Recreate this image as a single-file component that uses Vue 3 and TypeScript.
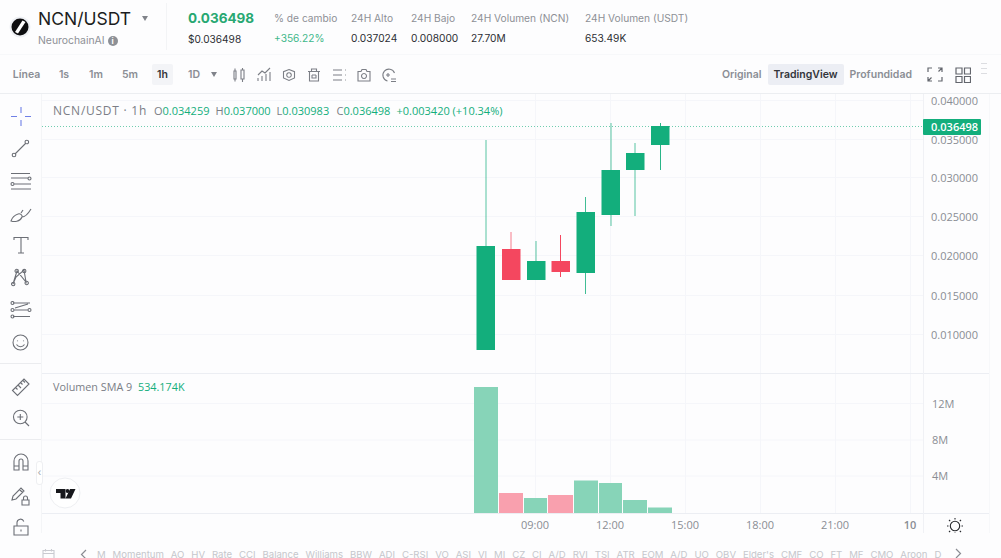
<script setup lang="ts">
interface Stat { label: string; value: string; up?: boolean }
const stats: Stat[] = [
  { label: '% de cambio', value: '+356.22%', up: true },
  { label: '24H Alto', value: '0.037024' },
  { label: '24H Bajo', value: '0.008000' },
  { label: '24H Volumen (NCN)', value: '27.70M' },
  { label: '24H Volumen (USDT)', value: '653.49K' },
]
const intervals = ['1s', '1m', '5m', '1h']
const tools: string[] = [
  'M3 4h2v8H3zM4 1.500V4M4 12v2.500M10 3h3v9h-3zM11.500 1v2M11.500 12v3',
  'M2 14v-3M6 14V9M10 14V7M14 14V5M2 8l4-4 3 2 5-5',
  'M8 2.500l5.500 2.200V11L8 13.500 2.500 11V4.700zM8 5.700a2.300 2.300 0 1 0 .01 0',
  'M2 4.500h12M5.500 4.500V2h5v2.500M3.500 4.500V14h9V4.500M6 8h4M6 8v3h4V8',
  'M2 3h9M2 8h9M2 13h9M14 3h.8M14 8h.8M14 13h.8',
  'M2 4.500h3l1-2h4l1 2h3V14H2zM8 6.500a2.500 2.500 0 1 0 .01 0',
  'M13.500 6A6 6 0 1 0 6.500 14M5 8h4M7 6v4M10 12h5M10 14.500h5',
]
const sideA: string[] = [
  'M11 0v6M11 13v6M1 9.500h6M15 9.500h6',
  'M5 15L16 4M2.200 16a1.800 1.800 0 1 0 3.600 0 1.800 1.800 0 1 0-3.600 0M15 3a1.800 1.800 0 1 0 3.600 0 1.800 1.800 0 1 0-3.600 0',
  'M1 1.500h19M1 6h17M4 12h17M1 17h20M18 6.500a1.500 1.500 0 1 0 3 0 1.500 1.500 0 1 0-3 0M1 12a1.500 1.500 0 1 0 3 0 1.500 1.500 0 1 0-3 0',
  'M1 17c3 1 9 1 11-4 .6-2-2-4-4-3-3 1-6 4-7 7zM11 9l2-3M12 13c3 0 6-3 9-8',
  'M4 4V1.500h14V4M11 1.500V17M8 17h6',
  'M3 16L7 3l9 11L14 2 6 9zM1.500 16a1.700 1.700 0 1 0 3.400 0 1.700 1.700 0 1 0-3.400 0M5 3a1.700 1.700 0 1 0 3.400 0 1.700 1.700 0 1 0-3.400 0M12.500 3a1.700 1.700 0 1 0 3.400 0 1.700 1.700 0 1 0-3.400 0M15 15a1.700 1.700 0 1 0 3.400 0 1.700 1.700 0 1 0-3.400 0',
  'M3 2h17M4 9h14M3 15.500h17M1 2a1.500 1.500 0 1 0 3 0 1.500 1.500 0 1 0-3 0M1 9a1.500 1.500 0 1 0 3 0 1.500 1.500 0 1 0-3 0M18 9a1.500 1.500 0 1 0 3 0 1.500 1.500 0 1 0-3 0M1 15.500a1.500 1.500 0 1 0 3 0 1.500 1.500 0 1 0-3 0M5 7l13-4',
  'M3 9.500a7.500 7.500 0 1 0 15 0 7.500 7.500 0 1 0-15 0M7.500 7.500v.8M13.500 7.500v.8M6.500 11.500c2 3 6 3 8 0',
]
const sideB: string[] = [
  'M1.500 13.500L13 2l5 5L6.500 18.500zM4.500 10.500l2 2M7 8l3 3M9.500 5.500l2 2M12 3.500l2 2',
  'M2.500 9a6.800 6.800 0 1 0 13.600 0 6.800 6.800 0 1 0-13.600 0M9.300 6v6M6.300 9h6M14 14l4 4',
]
const sideC: { d: string; vb: string }[] = [
  { d: 'M3 18V9a7 7 0 0 1 14 0v9h-5V9a2 2 0 0 0-4 0v9zM3 14h5M12 14h5', vb: '0 0 20 21' },
  { d: 'M1 15l1-4 8-8 3 3-8 8zM8.500 4.500l3 3M12.500 15v-2a2 2 0 0 1 4 0v2M11 15h7v5h-7z', vb: '0 0 20 21' },
  { d: 'M3 9h14v9H3zM6 9V5.500a3.500 3.500 0 0 1 6.800-1M10 12.500v2', vb: '0 0 20 21' },
]
const indicators = ['M', 'Momentum', 'AO', 'HV', 'Rate', 'CCI', 'Balance', 'Williams', 'BBW', 'ADI', 'C-RSI', 'VO', 'ASI', 'VI', 'MI', 'CZ', 'CI', 'A/D', 'RVI', 'TSI', 'ATR', 'EOM', 'A/D', 'UO', 'OBV', "Elder's", 'CMF', 'CO', 'FT', 'MF', 'CMO', 'Aroon', 'D']

// Chart coordinates are relative to the chart's svg, whose origin sits at (42, 94) on the page.
const ox = 42
const oy = 94
const up = '#13ae7c'
const down = '#f4475f'
const candles = [
  { x: 476.500, w: 18.500, top: 246, bot: 350, wx: 486, wt: 140, wb: 246, c: up, o: 0.7 },
  { x: 502, w: 18.500, top: 249, bot: 280, wx: 511, wt: 232, wb: 249, c: down, o: 0.7 },
  { x: 527, w: 18.500, top: 261, bot: 280, wx: 536, wt: 241, wb: 261, c: up, o: 0.7 },
  { x: 551.500, w: 18.500, top: 261, bot: 272, wx: 560.500, wt: 235, wb: 277, c: down, o: 1 },
  { x: 576.500, w: 18.500, top: 212, bot: 273, wx: 585.500, wt: 197, wb: 294, c: up, o: 0.8 },
  { x: 601.500, w: 18.500, top: 170, bot: 215, wx: 611, wt: 123, wb: 226, c: up, o: 0.7 },
  { x: 626, w: 18.500, top: 153, bot: 170, wx: 635, wt: 143, wb: 216, c: up, o: 0.7 },
  { x: 651, w: 18.500, top: 126, bot: 145, wx: 660.500, wt: 123, wb: 170, c: up, o: 0.9 },
]
const volUp = '#87d4b8'
const volDown = '#f9a0ae'
const bars = [
  { x: 474, w: 24, top: 387, c: volUp },
  { x: 499, w: 24, top: 493, c: volDown },
  { x: 524, w: 23, top: 498, c: volUp },
  { x: 548, w: 25, top: 495, c: volDown },
  { x: 574, w: 24, top: 480.500, c: volUp },
  { x: 599, w: 23, top: 483, c: volUp },
  { x: 623, w: 24, top: 500, c: volUp },
  { x: 648, w: 24, top: 507.500, c: volUp },
]
const prices = [
  { y: 100.500, t: '0.040000' }, { y: 139.500, t: '0.035000' }, { y: 177.500, t: '0.030000' },
  { y: 216.500, t: '0.025000' }, { y: 255.500, t: '0.020000' }, { y: 295.500, t: '0.015000' }, { y: 334.500, t: '0.010000' },
]
const vols = [{ y: 403.500, t: '12M' }, { y: 440, t: '8M' }, { y: 476, t: '4M' }]
const times = [
  { x: 535, t: '09:00' }, { x: 610, t: '12:00' }, { x: 685, t: '15:00' },
  { x: 760, t: '18:00' }, { x: 835, t: '21:00' }, { x: 910, t: '10' },
]
const ohlc = [
  ['O', '0.034259'], ['H', '0.037000'], ['L', '0.030983'], ['C', '0.036498'],
]
</script>

<template>
  <div class="page">
    <header class="head">
      <div class="brand">
        <svg class="logo" width="22" height="22" viewBox="0 0 22 22">
          <circle cx="11" cy="11" r="10.500" fill="#eef0f4" />
          <circle cx="11" cy="11" r="8.500" fill="#0d0d0f" />
          <path d="M13.500 4.500L6 16l3 1.500L16.500 6z" fill="#fff" />
        </svg>
        <div class="names">
          <div class="pair">NCN/USDT<span class="caret pair-caret"></span></div>
          <div class="full">NeurochainAI<span class="info">i</span></div>
        </div>
      </div>
      <div class="price">
        <div class="last">0.036498</div>
        <div class="fiat">$0.036498</div>
      </div>
      <div class="stats">
        <div v-for="s in stats" :key="s.label" class="stat">
          <div class="stat-label">{{ s.label }}</div>
          <div class="stat-value" :class="{ green: s.up }">{{ s.value }}</div>
        </div>
      </div>
    </header>

    <nav class="bar">
      <div class="bar-left">
        <span class="iv line">Línea</span>
        <span v-for="i in intervals" :key="i" class="iv" :class="{ on: i === '1h' }">{{ i }}</span>
        <span class="iv day">1D<span class="caret"></span></span>
        <svg v-for="(d, n) in tools" :key="n" class="tool" width="16" height="16" viewBox="0 0 16 16">
          <path :d="d" fill="none" stroke="#7c7f86" stroke-width="1.100" />
        </svg>
      </div>
      <div class="bar-right">
        <span class="view">Original</span>
        <span class="view active">TradingView</span>
        <span class="view">Profundidad</span>
        <svg class="fs" width="16" height="15" viewBox="0 0 16 15">
          <path d="M1 5V1h4M11 1h4v4M15 1l-3.500 3.500M1 10v4h4M1 14l3.500-3.500M15 10v4h-4" fill="none" stroke="#63666d" stroke-width="1.200" />
        </svg>
        <svg class="gridi" width="16" height="16" viewBox="0 0 16 16">
          <path d="M1 1h6v6H1zM9.500 1h6v6h-6zM1 9.500h6v6H1zM9.500 9.500h6v6h-6z" fill="none" stroke="#63666d" stroke-width="1.200" />
        </svg>
        <span class="grip"></span>
      </div>
    </nav>

    <main class="main">
      <aside class="side">
        <div class="group g1">
          <svg v-for="(d, n) in sideA" :key="n" width="22" height="19" viewBox="0 0 22 19" class="si">
            <path :d="d" fill="none" :stroke="n === 0 ? '#6f80e6' : '#6c6f76'" stroke-width="1.100" />
          </svg>
        </div>
        <div class="group g2">
          <svg v-for="(d, n) in sideB" :key="n" width="20" height="20" viewBox="0 0 20 20" class="si">
            <path :d="d" fill="none" stroke="#6c6f76" stroke-width="1.100" />
          </svg>
        </div>
        <div class="group g3">
          <svg v-for="(s, n) in sideC" :key="n" width="20" height="21" :viewBox="s.vb" class="si">
            <path :d="s.d" fill="none" stroke="#6c6f76" stroke-width="1.100" />
          </svg>
        </div>
        <span class="handle">‹</span>
      </aside>

      <div class="chart">
        <svg width="947" height="439" :viewBox="`${ox} ${oy} 947 439`" class="plot">
          <g stroke="#f5f6fa" stroke-width="1">
            <line v-for="p in prices" :key="p.t" x1="42" x2="923" :y1="p.y" :y2="p.y" />
            <line v-for="v in vols" :key="v.t" x1="42" x2="923" :y1="v.y" :y2="v.y" />
            <line v-for="t in times" :key="t.t" :x1="t.x + 0.5" :x2="t.x + 0.5" y1="94" y2="513" />
          </g>
          <line x1="42" x2="989" y1="373.500" y2="373.500" stroke="#eceef3" />
          <line x1="42" x2="989" y1="513.500" y2="513.500" stroke="#eceef3" />
          <line x1="923.500" x2="923.500" y1="94" y2="533" stroke="#f0f1f5" />
          <line x1="42" x2="923" y1="126.500" y2="126.500" stroke="#13ae7c" stroke-dasharray="1 2" opacity="0.6" />

          <g v-for="c in candles" :key="c.x">
            <line :x1="c.wx" :x2="c.wx" :y1="c.wt" :y2="c.wb" :stroke="c.c" stroke-width="1" :opacity="c.o" />
            <rect :x="c.x" :y="c.top" :width="c.w" :height="c.bot - c.top" :fill="c.c" />
          </g>
          <rect v-for="b in bars" :key="b.x" :x="b.x" :y="b.top" :width="b.w" :height="513 - b.top" :fill="b.c" />

          <text x="53" y="115" class="legend wide">NCN/USDT · 1h</text>
          <text y="115" class="legend vals">
            <tspan x="154">O</tspan><tspan class="g">{{ ohlc[0][1] }}</tspan>
            <tspan x="215.500">H</tspan><tspan class="g">{{ ohlc[1][1] }}</tspan>
            <tspan x="276.500">L</tspan><tspan class="g">{{ ohlc[2][1] }}</tspan>
            <tspan x="336.500">C</tspan><tspan class="g">{{ ohlc[3][1] }}</tspan>
            <tspan x="396.500" class="g">+0.003420 (+10.34%)</tspan>
          </text>
          <text x="53" y="391" class="legend vol">Volumen SMA 9</text>
          <text x="138" y="391" class="legend vol g">534.174K</text>

          <text v-for="p in prices" :key="p.t" x="931" :y="p.y + 4" class="axis">{{ p.t }}</text>
          <rect x="923" y="119" width="58" height="16" rx="1" fill="#13ae7c" />
          <text x="931" y="131" class="axis now">0.036498</text>
          <text v-for="v in vols" :key="v.t" x="932" :y="v.y + 4" class="axis">{{ v.t }}</text>
          <text v-for="t in times" :key="t.t" :x="t.x" y="529" class="axis mid" :class="{ strong: t.t === '10' }">{{ t.t }}</text>

          <circle cx="65" cy="493" r="15" fill="#fff" stroke="#eeeff2" stroke-width="1" />
          <path d="M56 489h9.500v9.500H60.500V493H56zM70 489h5.500l-4.500 9.500h-5.500z" fill="#17181c" />
          <circle cx="67.500" cy="491" r="1.900" fill="#17181c" />

          <g fill="none" stroke="#26282c" stroke-width="1.100" transform="translate(955 526)">
            <circle r="4.700" />
            <path d="M0-6.500v-1.500M0 6.500v1.500M-6.500 0h-1.500M6.500 0h1.500M-4.800-4.800l-1.200-1.200M4.800-4.800l1.200-1.200M-4.800 4.800l-1.200 1.200M4.800 4.800l1.200 1.200" />
          </g>
        </svg>
      </div>
    </main>

    <footer class="foot">
      <svg class="cal" width="13" height="13" viewBox="0 0 13 13">
        <path d="M1 2.500h11V12H1zM1 5.500h11M3.500 1v2.500M9.500 1v2.500" fill="none" stroke="#c9cad0" stroke-width="1.100" />
      </svg>
      <svg class="chev" width="7" height="11" viewBox="0 0 7 11"><path d="M6 1L1.500 5.500 6 10" fill="none" stroke="#8a8c93" stroke-width="1.200" /></svg>
      <div class="inds">
        <span v-for="(t, n) in indicators" :key="n">{{ t }}</span>
      </div>
      <svg class="chev last-chev" width="7" height="11" viewBox="0 0 7 11"><path d="M1 1l4.500 4.500L1 10" fill="none" stroke="#8a8c93" stroke-width="1.200" /></svg>
    </footer>
  </div>
</template>

<style scoped>
.page {
  width: 1001px;
  height: 558px;
  overflow: hidden;
  background: #fdfdfe;
  font-family: Inter, "Noto Sans", sans-serif;
  color: #222429;
  display: flex;
  flex-direction: column;
}
.head {
  height: 55px;
  flex: none;
  display: flex;
  align-items: flex-start;
  border-bottom: 1px solid #f7f8fa;
  box-sizing: border-box;
}
.brand {
  display: flex;
  width: 167px;
  height: 47px;
  padding: 5px 0 0 9px;
  box-sizing: border-box;
  border-right: 1px solid #f3f4f6;
  margin-top: 3px;
}
.logo { margin-top: 8px; margin-right: 7px; }
.pair {
  font-size: 17.500px;
  line-height: 22px;
  color: #1b1c20;
  white-space: nowrap;
}
.names { display: flex; flex-direction: column; }
.caret {
  display: inline-block;
  width: 0;
  height: 0;
  border: 3.500px solid transparent;
  border-top: 5px solid #80838a;
  border-bottom: 0;
}
.pair-caret { margin-left: 11px; vertical-align: 4px; }
.full {
  margin-top: 4px;
  font-size: 10.400px;
  line-height: 14px;
  color: #8d9096;
  display: flex;
  align-items: center;
  gap: 3px;
}
.info {
  width: 10px;
  height: 10px;
  border-radius: 50%;
  background: #8d9096;
  color: #fff;
  font-size: 8px;
  line-height: 10px;
  text-align: center;
  font-weight: 700;
}
.price { margin-left: 21px; width: 86px; padding-top: 10px; flex: none; }
.last { font-size: 13.500px; line-height: 16px; font-weight: 700; color: #27a872; }
.fiat { font-size: 10.100px; line-height: 14px; margin-top: 6px; color: #2c2e33; }
.stats { display: grid; grid-template-columns: 62px 45px 45px 99px auto; gap: 15px; padding-top: 11px; }
.stat-label { font-size: 10.200px; line-height: 14px; color: #8d9096; white-space: nowrap; }
.stat-value { font-size: 10.200px; line-height: 14px; margin-top: 6px; color: #2c2e33; white-space: nowrap; }
.green { color: #3fb88a; }

.bar {
  height: 39px;
  flex: none;
  display: flex;
  justify-content: space-between;
  align-items: center;
  box-sizing: border-box;
  padding-top: 1px;
  border-bottom: 1px solid #eceef1;
  font-size: 10.500px;
  font-weight: 600;
  color: #8b8e95;
}
.bar-left { display: flex; align-items: center; padding-left: 13px; }
.iv { display: flex; align-items: center; justify-content: center; height: 21px; }
.line { width: 27px; }
.iv:nth-child(2) { width: 12px; margin-left: 18px; }
.iv:nth-child(3) { width: 16px; margin-left: 18px; }
.iv:nth-child(4) { width: 16px; margin-left: 18px; }
.iv.on { width: 21px; margin-left: 14px; background: #f3f4f7; color: #33353a; border-radius: 2px; }
.day { margin-left: 15px; gap: 11px; }
.tool { margin-left: 9px; }
.tool:nth-of-type(1) { margin-left: 14px; }
.bar-right { display: flex; align-items: center; padding-right: 13px; position: relative; }
.view { height: 21px; line-height: 21px; padding: 0 6px; white-space: nowrap; }
.view.active { background: #eceef4; color: #33353a; border-radius: 2px; }
.fs { margin-left: 9px; }
.gridi { margin-left: 12px; margin-right: 17px; }
.grip {
  position: absolute;
  right: 14px;
  top: -1px;
  width: 6px;
  height: 9px;
  border-top: 1px solid #dcdde1;
  border-bottom: 1px solid #dcdde1;
  background: linear-gradient(#dcdde1, #dcdde1) center / 100% 1px no-repeat;
}

.main { flex: 1; display: flex; min-height: 0; }
.side {
  width: 42px;
  flex: none;
  position: relative;
  display: flex;
  flex-direction: column;
  box-sizing: border-box;
  border-right: 1px solid #f4f5f7;
  height: 439px;
}
.group { display: flex; flex-direction: column; align-items: center; flex: none; box-sizing: border-box; }
.g1 { height: 270px; padding-top: 13px; gap: 13.300px; border-bottom: 1px solid #ebecef; }
.g2 { height: 76px; padding-top: 13px; gap: 11px; border-bottom: 1px solid #ebecef; }
.g3 { padding-top: 12px; gap: 11.500px; }
.si { flex: none; }
.handle {
  position: absolute;
  left: 36px;
  top: 367px;
  width: 7px;
  height: 24px;
  border-radius: 3px;
  border: 1px solid #eeeff2;
  background: #fff;
  box-sizing: border-box;
  font-size: 10px;
  line-height: 20px;
  text-align: center;
  color: #a5a7ad;
}
.chart { width: 947px; height: 439px; flex: none; border-right: 1px solid #f7f8fa; }
.plot { display: block; font-family: "Open Sans", sans-serif; }
.legend { font-size: 12px; fill: #7b7e86; }
.wide { letter-spacing: 0.75px; }
.vals { font-size: 11px; }
.vol { font-size: 10.800px; }
.g { fill: #13ae7c; }
.axis { font-size: 11px; fill: #8a8d94; }
.now { fill: #fff; font-weight: 600; }
.mid { text-anchor: middle; }
.strong { font-weight: 600; }

.foot {
  height: 25px;
  flex: none;
  position: relative;
  display: flex;
  align-items: center;
  padding-top: 17px;
  box-sizing: border-box;
  font-size: 9.600px;
  color: #c5c7cc;
}
.cal { margin-left: 42px; flex: none; }
.chev { flex: none; margin-left: 25px; }
.inds { display: flex; gap: 6.900px; margin-left: 10px; white-space: nowrap; }
.last-chev { position: absolute; left: 955px; top: 15px; margin: 0; }
</style>
